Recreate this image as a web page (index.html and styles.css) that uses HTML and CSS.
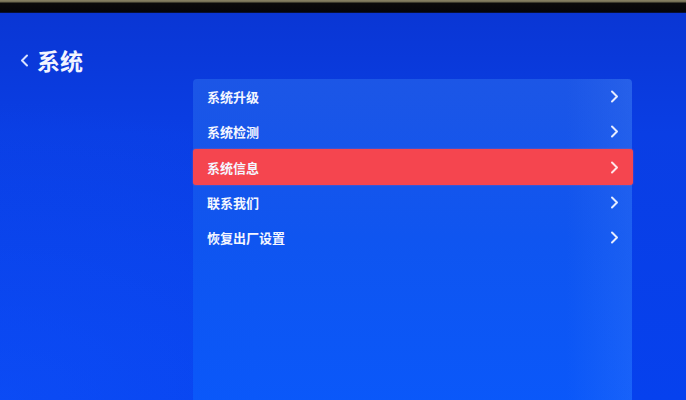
FILE: index.html
```html
<!DOCTYPE html>
<html lang="zh">
<head>
<meta charset="utf-8">
<link rel="stylesheet" href="styles.css">
</head>
<body>
<div class="bezel"></div>
<div class="screen">
  <div class="title">
    <svg class="back" width="9" height="13" viewBox="0 0 9 13"><path d="M7 1.5 L2 6.5 L7 11.5" fill="none" stroke="#d8e2ff" stroke-width="2" stroke-linecap="round" stroke-linejoin="round"/></svg>
    <span>系统</span>
  </div>
  <div class="panel">
    <div class="row"><span>系统升级</span><svg class="chev" width="9" height="13" viewBox="0 0 9 13"><path d="M2 1.5 L7 6.5 L2 11.5" fill="none" stroke="#e6ecff" stroke-width="2" stroke-linecap="round" stroke-linejoin="round"/></svg></div>
    <div class="row"><span>系统检测</span><svg class="chev" width="9" height="13" viewBox="0 0 9 13"><path d="M2 1.5 L7 6.5 L2 11.5" fill="none" stroke="#e6ecff" stroke-width="2" stroke-linecap="round" stroke-linejoin="round"/></svg></div>
    <div class="row active"><span>系统信息</span><svg class="chev" width="9" height="13" viewBox="0 0 9 13"><path d="M2 1.5 L7 6.5 L2 11.5" fill="none" stroke="#ffe6e8" stroke-width="2" stroke-linecap="round" stroke-linejoin="round"/></svg></div>
    <div class="row"><span>联系我们</span><svg class="chev" width="9" height="13" viewBox="0 0 9 13"><path d="M2 1.5 L7 6.5 L2 11.5" fill="none" stroke="#e6ecff" stroke-width="2" stroke-linecap="round" stroke-linejoin="round"/></svg></div>
    <div class="row"><span>恢复出厂设置</span><svg class="chev" width="9" height="13" viewBox="0 0 9 13"><path d="M2 1.5 L7 6.5 L2 11.5" fill="none" stroke="#e6ecff" stroke-width="2" stroke-linecap="round" stroke-linejoin="round"/></svg></div>
  </div>
</div>
</body>
</html>
```
FILE: styles.css
```css
html, body {
  margin: 0;
  padding: 0;
  width: 686px;
  height: 400px;
  overflow: hidden;
  background: #000;
  font-family: "Noto Sans CJK SC", "Noto Sans", sans-serif;
}
.bezel {
  height: 13px;
  background: linear-gradient(to bottom, #8a8466 0, #6e6a50 2px, #0a0a0a 3px, #050508 12px, #0b1a60 13px);
}
.screen {
  height: 387px;
  background:
    radial-gradient(ellipse at 0% 100%, rgba(20,90,255,0.4), rgba(20,90,255,0) 55%),
    linear-gradient(to bottom, #0a36d4 0, #0a3ee4 120px, #0641ee 387px);
}
.title {
  display: flex;
  align-items: center;
  padding: 33px 0 0 20px;
  height: 28px;
  color: #f2f4ff;
  font-size: 23px;
  font-weight: 700;
}
.back {
  margin-right: 8px;
  margin-top: 1px;
}
.panel {
  margin: 5px 0 0 193px;
  width: 439px;
  height: 330px;
  border-radius: 4px 4px 0 0;
  background-image:
    linear-gradient(to right, rgba(255,255,255,0) 85%, rgba(120,170,255,0.12) 100%),
    linear-gradient(to bottom, #1c56e6 0, #0f55f0 160px, #0a58fa 330px);
}
.row {
  display: flex;
  align-items: center;
  justify-content: space-between;
  height: 35px;
  padding: 0 13px 0 14px;
  color: #f4f6ff;
  font-size: 13px;
  font-weight: 700;
}
.row.active {
  height: 36px;
  background: #f5454f;
  border-radius: 3px;
  margin-right: -1px;
  padding-right: 14px;
  box-shadow: 0 0 2px rgba(255,90,100,0.6);
}
.chev {
  display: block;
}
```
